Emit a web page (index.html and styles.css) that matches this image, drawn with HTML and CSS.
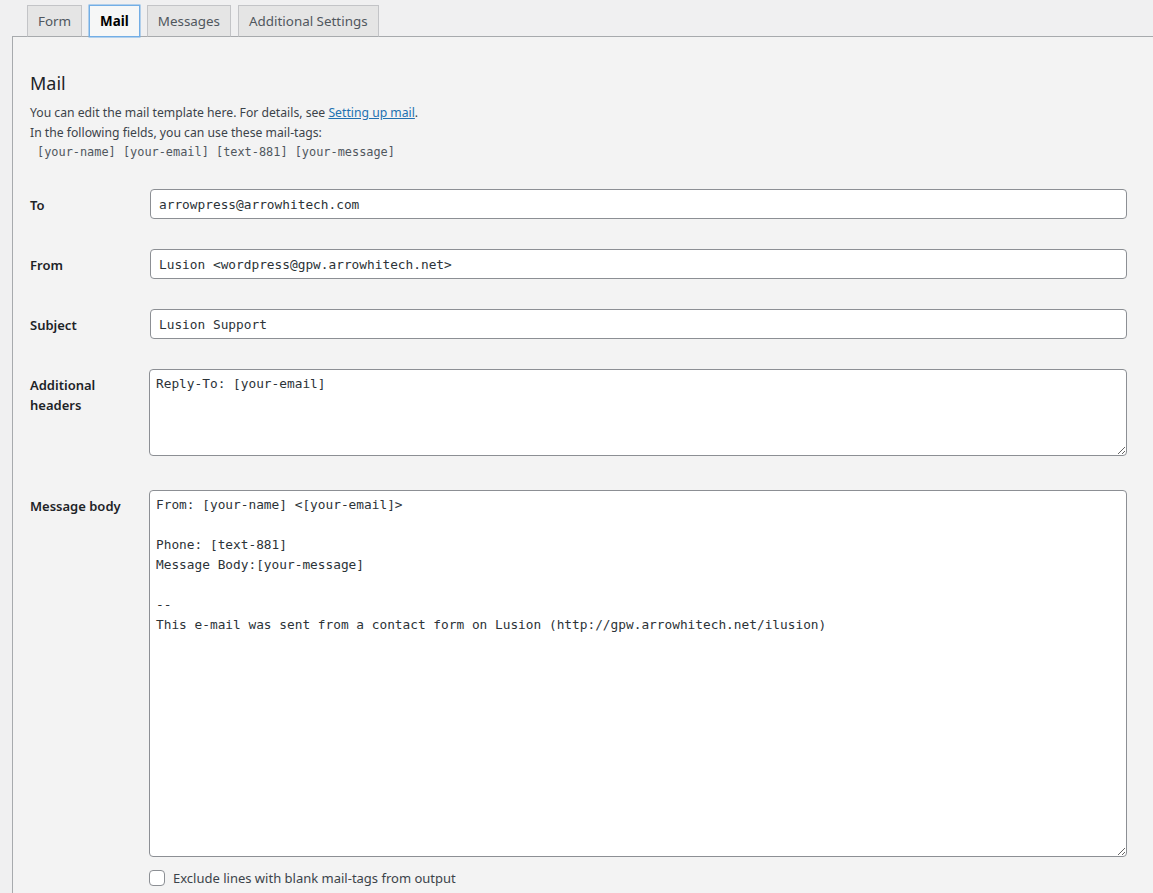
FILE: index.html
```html
<!DOCTYPE html>
<html lang="en">
<head>
<meta charset="utf-8">
<title>Mail</title>
<link rel="stylesheet" href="styles.css">
</head>
<body>
<nav class="tabs">
  <a class="tab">Form</a>
  <a class="tab active">Mail</a>
  <a class="tab">Messages</a>
  <a class="tab">Additional Settings</a>
</nav>
<section class="panel">
  <h2 class="title">Mail</h2>
  <p class="desc">You can edit the mail template here. For details, see <a href="#" class="link">Setting up mail</a>.</p>
  <p class="desc">In the following fields, you can use these mail-tags:</p>
  <p class="tags">[your-name] [your-email] [text-881] [your-message]</p>

  <div class="rows">
    <div class="row">
      <label class="label">To</label>
      <input class="field" type="text" value="arrowpress@arrowhitech.com">
    </div>
    <div class="row">
      <label class="label">From</label>
      <input class="field" type="text" value="Lusion &lt;wordpress@gpw.arrowhitech.net&gt;">
    </div>
    <div class="row">
      <label class="label">Subject</label>
      <input class="field" type="text" value="Lusion Support">
    </div>
    <div class="row row-headers">
      <label class="label">Additional<br>headers</label>
      <textarea class="area area-small">Reply-To: [your-email]</textarea>
    </div>
    <div class="row row-body">
      <label class="label">Message body</label>
      <div class="body-col">
        <textarea class="area area-large">From: [your-name] &lt;[your-email]&gt;

Phone: [text-881]
Message Body:[your-message]

--
This e-mail was sent from a contact form on Lusion (http://gpw.arrowhitech.net/ilusion)</textarea>
        <label class="check"><span class="box"></span><span>Exclude lines with blank mail-tags from output</span></label>
      </div>
    </div>
  </div>
</section>
</body>
</html>
```
FILE: styles.css
```css
html, body {
  margin: 0;
  padding: 0;
  background: #f0f0f1;
  font-family: "Noto Sans", "Open Sans", sans-serif;
  color: #3c434a;
}

body {
  height: 893px;
  overflow: hidden;
  display: flex;
  flex-direction: column;
}

.tabs {
  display: flex;
  gap: 7px;
  padding: 5px 0 0 27px;
  margin-bottom: -1px;
  position: relative;
  z-index: 1;
}

.tab {
  display: block;
  box-sizing: border-box;
  height: 32px;
  line-height: 30px;
  padding: 0 10px;
  font-size: 13.4px;
  color: #50575e;
  background: #e5e5e5;
  border: 1px solid #c3c4c7;
  border-bottom-color: #a7aaad;
  text-decoration: none;
}

.tab.active {
  background: #f6f7f7;
  color: #000;
  font-weight: 700;
  border: 1px solid #72aee6;
  box-shadow: 0 0 0 0.5px #72aee6;
}

.panel {
  flex: 1;
  margin-left: 12px;
  border-top: 1px solid #a7aaad;
  border-left: 1px solid #a7aaad;
  background: #f3f3f3;
  padding: 34px 26px 0 17px;
  overflow: hidden;
}

.title {
  margin: 0 0 8px;
  font-size: 18px;
  line-height: 24px;
  font-weight: 400;
  color: #1d2327;
}

.desc {
  margin: 0;
  font-size: 12.2px;
  line-height: 19.5px;
}

.link {
  color: #2271b1;
  text-decoration: underline;
}

.tags {
  margin: 0;
  padding-left: 7px;
  font-family: "DejaVu Sans Mono", "Liberation Mono", monospace;
  font-size: 11.9px;
  line-height: 21px;
  color: #50575e;
}

.rows {
  margin-top: 26px;
  display: flex;
  flex-direction: column;
  gap: 30px;
}

.row {
  display: flex;
  align-items: flex-start;
}

.row-headers {
  margin-bottom: 4px;
}

.label {
  flex: 0 0 120px;
  padding-top: 7px;
  font-size: 13px;
  line-height: 19.5px;
  font-weight: 600;
  color: #1d2327;
}

.field {
  flex: 1;
  box-sizing: border-box;
  height: 30px;
  margin: 0;
  padding: 0 8px;
  border: 1px solid #8c8f94;
  border-radius: 4px;
  background: #fff;
  font-family: "DejaVu Sans Mono", "Liberation Mono", monospace;
  font-size: 12.8px;
  color: #2c3338;
  outline: none;
}

.body-col {
  flex: 1;
  display: flex;
  flex-direction: column;
  margin-left: -1px;
}

.area {
  box-sizing: border-box;
  margin: 0;
  padding: 3px 6px;
  border: 1px solid #8c8f94;
  border-radius: 4px;
  background: #fff;
  font-family: "DejaVu Sans Mono", "Liberation Mono", monospace;
  font-size: 12.8px;
  line-height: 20px;
  color: #2c3338;
  outline: none;
  resize: vertical;
  display: block;
}

.area-small {
  flex: 1;
  margin-left: -1px;
  height: 87px;
  padding-top: 4px;
}

.area-large {
  width: 100%;
  height: 367px;
  padding-top: 4px;
}

.check {
  display: flex;
  align-items: center;
  gap: 8px;
  margin-top: 13px;
  font-size: 13px;
  line-height: 16px;
  color: #3c434a;
}

.box {
  display: block;
  box-sizing: border-box;
  width: 16px;
  height: 16px;
  border: 1px solid #8c8f94;
  border-radius: 4px;
  background: #fff;
}
```
